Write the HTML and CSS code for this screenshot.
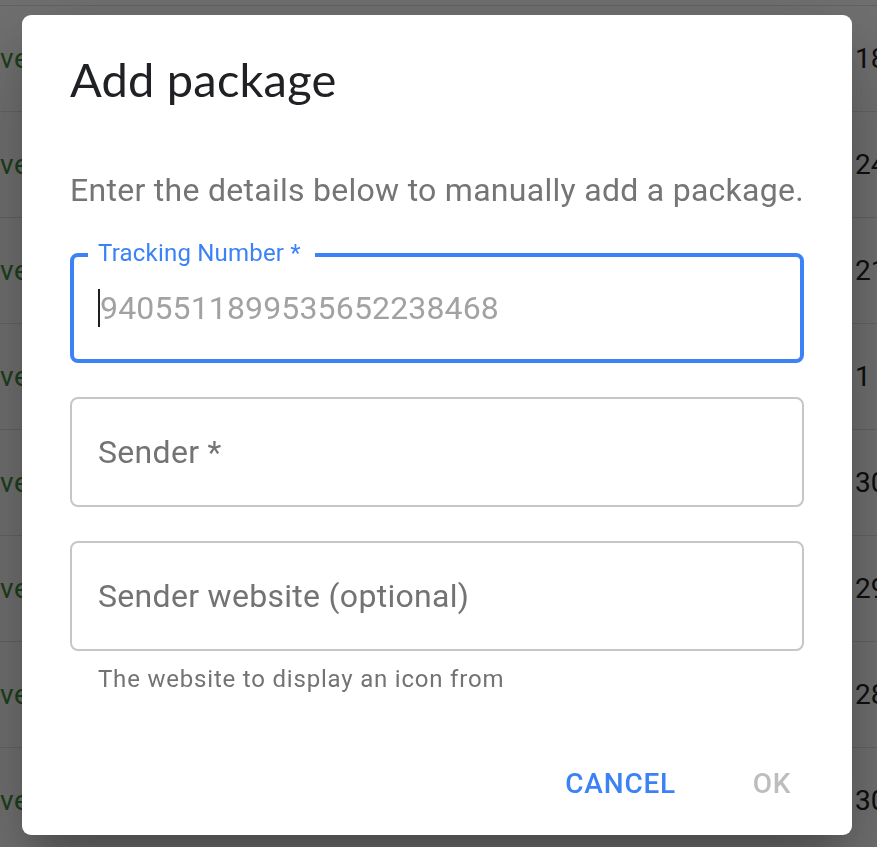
FILE: index.html
```html
<!DOCTYPE html>
<html lang="en">
<head>
<meta charset="utf-8">
<title>Add package</title>
<link rel="stylesheet" href="styles.css">
</head>
<body>
<div class="list">
  <div class="row row-partial"></div>
  <div class="row"><span class="status">vered</span><span class="date">18</span></div>
  <div class="row"><span class="status">vered</span><span class="date">24</span></div>
  <div class="row"><span class="status">vered</span><span class="date">21</span></div>
  <div class="row"><span class="status">vered</span><span class="date">1</span></div>
  <div class="row"><span class="status">vered</span><span class="date">30</span></div>
  <div class="row"><span class="status">vered</span><span class="date">29</span></div>
  <div class="row"><span class="status">vered</span><span class="date">28</span></div>
  <div class="row"><span class="status">vered</span><span class="date">30</span></div>
</div>
<div class="scrim"></div>
<div class="dialog" role="dialog" aria-labelledby="dlg-title">
  <h2 class="dialog-title" id="dlg-title">Add package</h2>
  <p class="dialog-text">Enter the details below to manually add a package.</p>
  <div class="field field-focused">
    <span class="field-label">Tracking Number *</span>
    <div class="field-input"><span class="caret"></span><span class="placeholder">9405511899535652238468</span></div>
  </div>
  <div class="field">
    <div class="field-input"><span class="field-hint">Sender *</span></div>
  </div>
  <div class="field">
    <div class="field-input"><span class="field-hint">Sender website (optional)</span></div>
  </div>
  <p class="helper">The website to display an icon from</p>
  <div class="actions">
    <button class="btn btn-primary" type="button">Cancel</button>
    <button class="btn btn-disabled" type="button" disabled>OK</button>
  </div>
</div>
</body>
</html>
```

FILE: styles.css
```css
* { box-sizing: border-box; }

html, body {
  margin: 0;
  padding: 0;
  width: 877px;
  height: 847px;
  overflow: hidden;
  background: #ffffff;
  font-family: Roboto, "Liberation Sans", Arial, sans-serif;
}

.list {
  display: flex;
  flex-direction: column;
}

.row {
  display: grid;
  grid-template-columns: 855px 1fr;
  align-items: center;
  height: 106px;
  border-bottom: 1px solid #e2e2e2;
  white-space: nowrap;
  overflow: hidden;
  font-size: 28px;
}

.row-partial {
  height: 6px;
}

.status {
  color: #43903f;
  font-weight: 400;
  letter-spacing: 0.6px;
}

.date {
  color: #222222;
}

.scrim {
  position: fixed;
  inset: 0;
  background: rgba(0, 0, 0, 0.56);
}

.dialog {
  position: fixed;
  left: 22px;
  top: 15px;
  width: 830px;
  height: 820px;
  display: flex;
  flex-direction: column;
  background: #ffffff;
  border-radius: 9px;
  box-shadow: 0 22px 30px -14px rgba(0, 0, 0, 0.2),
              0 48px 76px 6px rgba(0, 0, 0, 0.14),
              0 18px 92px 16px rgba(0, 0, 0, 0.12);
}

.dialog-title {
  margin: 0;
  padding: 32px 48px 0;
  font-family: Lato, "Open Sans", sans-serif;
  font-weight: 400;
  font-size: 47px;
  line-height: 64px;
  letter-spacing: 0.2px;
  color: #202124;
}

.dialog-text {
  margin: 55px 48px 0;
  font-size: 32px;
  line-height: 48px;
  letter-spacing: 0.28px;
  white-space: nowrap;
  color: #757575;
}

.field {
  position: relative;
  height: 110px;
  margin: 34px 48px 0;
  border: 2px solid #c6c6c6;
  border-radius: 8px;
  padding: 0 26px;
}

.field-focused {
  margin-top: 39px;
  border: 4px solid #3b82f6;
  padding: 0 24px;
}

.field-label {
  position: absolute;
  left: 14px;
  top: -16px;
  padding: 0 14px 0 10px;
  background: #ffffff;
  font-size: 24px;
  line-height: 24px;
  letter-spacing: 0.2px;
  color: #3b82f6;
}

.field-input {
  display: flex;
  align-items: center;
  height: 100%;
  font-size: 32px;
  line-height: 40px;
}

.caret {
  width: 2px;
  height: 38px;
  background: #1f1f1f;
}

.placeholder {
  color: #a2a2a2;
  letter-spacing: 0.15px;
}

.field-hint {
  color: #737373;
  letter-spacing: 0.3px;
}

.helper {
  margin: 8px 48px 0;
  padding-left: 28px;
  font-size: 24px;
  line-height: 40px;
  letter-spacing: 0.8px;
  color: #737373;
}

.actions {
  display: flex;
  justify-content: flex-end;
  gap: 16px;
  margin-top: 32px;
  padding: 16px;
}

.btn {
  height: 72px;
  min-width: 128px;
  padding: 0 16px;
  border: 0;
  border-radius: 8px;
  background: transparent;
  font-family: Roboto, "Liberation Sans", Arial, sans-serif;
  font-weight: 500;
  font-size: 28px;
  letter-spacing: 0.8px;
  text-transform: uppercase;
}

.btn-primary {
  color: #3b82f6;
}

.btn-disabled {
  color: #bdbdbd;
}
```
